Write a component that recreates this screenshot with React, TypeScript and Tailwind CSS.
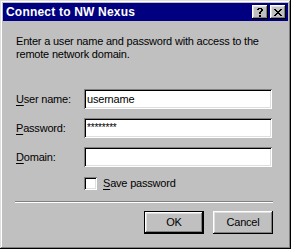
import React from "react";

const CLOSE = ["11....11", ".11..11.", "..1111..", "...11...", "..1111..", ".11..11.", "11....11"];
const HELP = [".1111.", "11..11", "....11", "...11.", "..11..", "..11..", "......", "..11..", "..11.."];

function Pix({ rows }: { rows: string[] }) {
  const w = rows[0].length;
  const h = rows.length;
  const rects: React.ReactNode[] = [];
  rows.forEach((r, y) =>
    r.split("").forEach((c, x) => {
      if (c === "1") rects.push(<rect key={`${x}-${y}`} x={x} y={y} width={1} height={1} fill="#000" />);
    })
  );
  return (
    <svg width={w} height={h} viewBox={`0 0 ${w} ${h}`} shapeRendering="crispEdges">
      {rects}
    </svg>
  );
}

function TitleBtn({ rows }: { rows: string[] }) {
  return (
    <div className="w-[16px] h-[14px] bg-[#c0c0c0] flex items-center justify-center shadow-[inset_-1px_-1px_0_#000,inset_1px_1px_0_#fff,inset_-2px_-2px_0_#808080,inset_2px_2px_0_#dfdfdf]">
      <Pix rows={rows} />
    </div>
  );
}

function Field({ children }: { children?: React.ReactNode }) {
  return (
    <div className="w-[188px] h-[20px] bg-white flex items-center pl-[3px] shadow-[inset_1px_1px_0_#808080,inset_-1px_-1px_0_#fff,inset_2px_2px_0_#000,inset_-2px_-2px_0_#dfdfdf]">
      {children}
    </div>
  );
}

function Row({ label, rest, children, first }: { label: string; rest: string; children?: React.ReactNode; first?: boolean }) {
  return (
    <div className={`flex items-center ${first ? "" : "mt-[9px]"}`}>
      <div className="w-[68px] leading-[13px]">
        <span className="underline underline-offset-[2px]">{label}</span>
        {rest}
      </div>
      <Field>{children}</Field>
    </div>
  );
}

function Btn({ children, def }: { children: React.ReactNode; def?: boolean }) {
  return (
    <div
      className={`w-[60px] h-[23px] bg-[#c0c0c0] flex items-center justify-center ${
        def
          ? "shadow-[inset_0_0_0_1px_#000,inset_-2px_-2px_0_#000,inset_2px_2px_0_#fff,inset_-3px_-3px_0_#808080,inset_3px_3px_0_#dfdfdf]"
          : "shadow-[inset_-1px_-1px_0_#000,inset_1px_1px_0_#fff,inset_-2px_-2px_0_#808080,inset_2px_2px_0_#dfdfdf]"
      }`}
    >
      {children}
    </div>
  );
}

export default function App() {
  return (
    <div
      className="w-[291px] h-[249px] bg-[#c0c0c0] p-[3px] flex flex-col text-[11px] text-black shadow-[inset_-1px_-1px_0_#000,inset_1px_1px_0_#dfdfdf,inset_-2px_-2px_0_#808080,inset_2px_2px_0_#fff]"
      style={{ fontFamily: '"Liberation Sans", Arial, sans-serif' }}
    >
      <div className="h-[18px] bg-[#000080] flex items-center pl-[3px] pr-[2px]">
        <span className="text-white font-bold text-[12px] leading-[18px] tracking-[0.2px]">Connect to NW Nexus</span>
        <div className="ml-auto flex gap-[2px]">
          <TitleBtn rows={HELP} />
          <TitleBtn rows={CLOSE} />
        </div>
      </div>
      <div className="flex-1 flex flex-col pl-[13px] pr-[15px] pt-[14px] tracking-[-0.2px]">
        <p className="leading-[13px]">
          Enter a user name and password with access to the
          <br />
          remote network domain.
        </p>
        <div className="mt-[28px]">
          <Row label="U" rest="ser name:" first>
            <span className="leading-[13px]">username</span>
          </Row>
          <Row label="P" rest="assword:">
            <span className="leading-[13px] self-start mt-[3px] text-[10px]">********</span>
          </Row>
          <Row label="D" rest="omain:" />
        </div>
        <div className="mt-[10px] flex items-center pl-[68px]">
          <div className="w-[13px] h-[13px] bg-white shadow-[inset_1px_1px_0_#808080,inset_-1px_-1px_0_#fff,inset_2px_2px_0_#000,inset_-2px_-2px_0_#dfdfdf]" />
          <span className="ml-[6px] leading-[13px]">
            <span className="underline underline-offset-[2px]">S</span>ave password
          </span>
        </div>
        <div className="mt-[11px] -ml-[1px] h-[2px] border-t border-t-[#808080] border-b border-b-white" />
        <div className="mt-[8px] flex justify-end gap-[9px]">
          <Btn def>OK</Btn>
          <Btn>Cancel</Btn>
        </div>
      </div>
    </div>
  );
}
